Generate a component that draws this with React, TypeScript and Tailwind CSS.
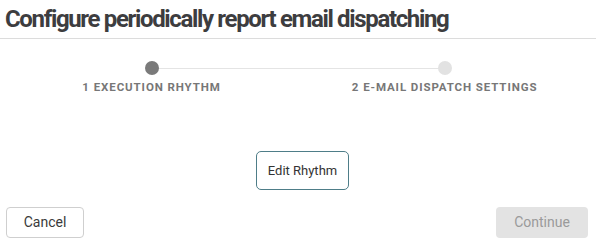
export default function App() {
  const steps = [
    { n: 1, label: "EXECUTION RHYTHM", active: true },
    { n: 2, label: "E-MAIL DISPATCH SETTINGS", active: false },
  ];

  return (
    <div className="w-[596px] h-[251px] bg-white flex flex-col font-['Roboto',sans-serif]">
      {/* Header */}
      <div className="h-[39px] border-b border-[#dcdcdc] px-[5px] flex items-center">
        <h1 className="text-[24px] font-bold text-[#3d3d3f] leading-none tracking-[-1.35px]">
          Configure periodically report email dispatching
        </h1>
      </div>

      {/* Stepper */}
      <div className="relative grid grid-cols-2 px-[5px] pt-[22px]">
        <div className="absolute left-[151px] right-[151px] top-[29px] h-px bg-[#e4e4e4]" />
        {steps.map((s) => (
          <div key={s.n} className="relative flex flex-col items-center">
            <div
              className={
                s.active
                  ? "w-[14px] h-[14px] rounded-full bg-[#7a7a7a]"
                  : "w-[14px] h-[14px] rounded-full bg-[#e2e2e2]"
              }
            />
            <div className="mt-[5px] text-[11.5px] font-bold text-[#777] leading-[14px] tracking-[0.9px] flex gap-[4px]">
              <span>{s.n}</span>
              <span>{s.label}</span>
            </div>
          </div>
        ))}
      </div>

      {/* Body */}
      <div className="flex justify-center pl-[9px] pt-[57px]">
        <button className="w-[93px] h-[39px] rounded-[5px] border border-[#4e7d88] text-[13px] text-[#333]">
          Edit Rhythm
        </button>
      </div>

      {/* Footer */}
      <div className="flex justify-between pl-[6px] pr-[8px] mt-[17px]">
        <button className="w-[78px] h-[31px] rounded-[4px] border border-[#cfcfcf] text-[14px] text-[#3a3a3a]">
          Cancel
        </button>
        <button className="w-[92px] h-[31px] rounded-[4px] bg-[#e3e3e3] text-[14px] text-[#9a9a9a]">
          Continue
        </button>
      </div>
    </div>
  );
}
